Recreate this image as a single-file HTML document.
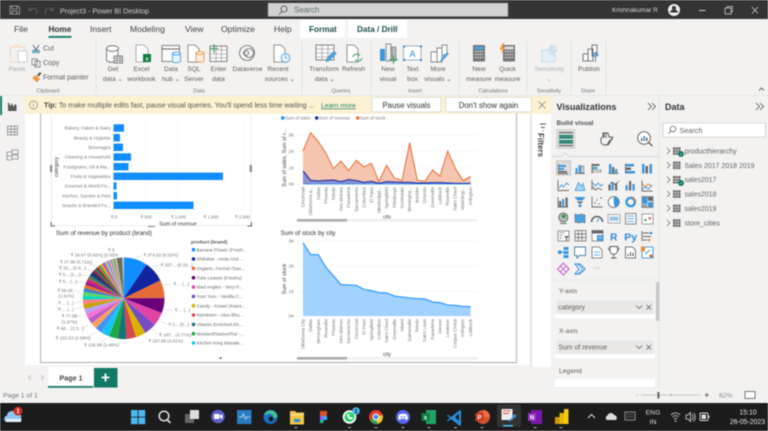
<!DOCTYPE html>
<html><head><meta charset="utf-8"><title>Project3 - Power BI Desktop</title>
<style>
html,body{margin:0;padding:0;width:768px;height:431px;overflow:hidden;background:#f3f2f1}
svg{display:block;filter:blur(.4px)}
text{font-family:"Liberation Sans",sans-serif;fill:#605e5c}
.tab{font-size:8.6px;fill:#444}
.rb{font-size:6.6px;fill:#605e5c;text-anchor:middle}
.gl{font-size:5.4px;fill:#777;text-anchor:middle}
.ax{font-size:4.4px;fill:#777}
.ti{font-size:6.2px;fill:#333}
.ct{font-size:4.6px;fill:#777;text-anchor:end}
.an{font-size:5.3px;fill:#444;text-anchor:middle}
.pl{font-size:13.5px;fill:#777}
.lg{font-size:4.7px;fill:#666}
.dt{font-size:7px;fill:#666}
.ol{fill:none;stroke:#666;stroke-width:.8}
.bl{fill:none;stroke:#3a96dd;stroke-width:.9}
.ic{fill:none;stroke:#666;stroke-width:.9}
.b{fill:#3a96dd}.g{fill:#666}
</style></head><body>
<svg width="768" height="431" viewBox="0 0 768 431" xmlns="http://www.w3.org/2000/svg">
<!-- base -->
<rect width="768" height="431" fill="#f3f2f1"/>
<rect width="768" height="19" fill="#343434"/>
<rect x="268" y="3" width="240" height="13.5" fill="#d2d2d2" stroke="#888" stroke-width=".5"/>
<circle cx="284" cy="9" r="3" fill="none" stroke="#444" stroke-width=".8"/><path d="M282 11.5l-3 3" stroke="#444" stroke-width=".8"/>
<text x="294" y="12.6" font-size="8" style="fill:#5f6f6c">Search</text>
<!-- titlebar -->
<path d="M10 6h8l1.5 1.5V14h-9.500z M12 6v3h5V6 M12 14v-3h5v3" fill="none" stroke="#aaa" stroke-width=".8"/>
<path d="M29 7v3.500h3.500M29 10.500c2-3 7-3 8 1 0 1-.5 2-1 2.500" fill="none" stroke="#666" stroke-width=".8"/>
<path d="M53 7v3.500h-3.500M53 10.500c-2-3-7-3-8 1 0 1 .5 2 1 2.500" fill="none" stroke="#666" stroke-width=".8"/>
<text x="60" y="13.300" font-size="7.100" style="fill:#d0d0d0">Project3 - Power BI Desktop</text>
<text x="612" y="12" font-size="6.400" style="fill:#d5d5d5">Krishnakumar R</text>
<circle cx="674" cy="10" r="6" fill="#eee"/><circle cx="674" cy="8" r="2" fill="#343434"/><path d="M670 12.500a4 3 0 0 1 8 0z" fill="#343434"/>
<path d="M699 10.500h6.500" stroke="#ccc"/><rect x="725" y="8" width="6" height="6" fill="none" stroke="#ccc" stroke-width=".8"/><path d="M727 8V6.500h5.500V12H731" fill="none" stroke="#ccc" stroke-width=".7"/>
<path d="M752 7l6 6.500M758 7l-6 6.500" stroke="#ccc" stroke-width=".8"/>
<!-- tabs -->
<rect x="300" y="20" width="45" height="18" fill="#fff"/><rect x="348" y="20" width="59" height="18" fill="#fff"/>
<text class="tab" x="14" y="32">File</text>
<text class="tab" x="48.500" y="32" style="font-weight:bold;fill:#333;font-size:8.200px">Home</text><rect x="48.500" y="36" width="23" height="1.800" fill="#117865"/>
<text class="tab" x="90" y="32">Insert</text>
<text class="tab" x="130" y="32">Modeling</text>
<text class="tab" x="185" y="32">View</text>
<text class="tab" x="221" y="32">Optimize</text>
<text class="tab" x="274" y="32">Help</text>
<text class="tab" x="309" y="32" style="fill:#1e4d4d;font-weight:bold;font-size:8.200px">Format</text>
<text class="tab" x="357" y="32" style="fill:#1e4d4d;font-weight:bold;font-size:8.200px">Data / Drill</text>
<!-- ribbon separators -->
<path d="M96 41v53M302 41v53M371 41v53M459 41v53M527 41v53M571 41v53M606 41v53" stroke="#dcdcdc" stroke-width=".7"/>
<path d="M0 95.500h768" stroke="#ddd" stroke-width=".6"/>
<!-- clipboard -->
<path d="M10.500 47h14v15h-14z" fill="none" stroke="#f2d5b8" stroke-width=".9"/><rect x="18" y="51" width="9" height="11" fill="#fff" stroke="#bbb" stroke-width=".7"/><rect x="14" y="45" width="6" height="3" fill="#f6e2ce"/>
<text class="rb" x="17" y="71" style="fill:#a8a8a8">Paste</text>
<path d="M33 45l3.500 5.500M39 45l-3.500 5.500" stroke="#557" stroke-width=".8"/><circle cx="34" cy="51.500" r="1.300" fill="none" stroke="#38a"/><circle cx="38" cy="51.500" r="1.300" fill="none" stroke="#38a"/>
<text x="43" y="50.500" font-size="7">Cut</text>
<path d="M32 59h5v6h-5zM35 61h5v6h-5z" fill="#f8f8f8" stroke="#666" stroke-width=".7"/>
<text x="43" y="65" font-size="7">Copy</text>
<path d="M32 78l4-3 4 4-3 3.500z" fill="#ee9a4c"/><path d="M37 75l3-3 1.500 1.500-3 3z" fill="#555"/>
<text x="43" y="79.500" font-size="7">Format painter</text>
<text class="gl" x="48" y="92.500">Clipboard</text>
<!-- data group -->
<path d="M106.500 49v11c0 3 11.500 3 11.500 0V49" fill="#fafafa" stroke="#666" stroke-width=".8"/><ellipse cx="112.500" cy="48.500" rx="6" ry="2.800" fill="#fafafa" stroke="#666" stroke-width=".8"/>
<rect x="114" y="56" width="8.500" height="7" fill="#eee" stroke="#555" stroke-width=".7"/><path d="M114 58.300h8.500M114 60.600h8.500M117 56v7M120 56v7" stroke="#555" stroke-width=".5"/>
<path d="M136 45h8l4 4v13h-12z" fill="#fff" stroke="#999" stroke-width=".8"/><rect x="143" y="54" width="8" height="8" fill="#107c41"/><text x="147" y="60.500" text-anchor="middle" font-size="5.500" style="fill:#fff;font-weight:bold">x</text>
<rect x="162" y="45.500" width="17.500" height="16" fill="#fafafa" stroke="#666" stroke-width=".8"/><path d="M162 49h17.500" stroke="#666"/><path d="M172.500 53.500v8c0 1.500 8 1.500 8 0v-8" fill="#e7f3fb" stroke="#3a96dd" stroke-width=".8"/><ellipse cx="176.500" cy="53.500" rx="4" ry="1.500" fill="#e7f3fb" stroke="#3a96dd" stroke-width=".8"/>
<path d="M188 45h7l4 4v13h-11z" fill="#fff" stroke="#777" stroke-width=".8"/><path d="M196 53v8c0 1.500 8 1.500 8 0v-8" fill="#fdf0e4" stroke="#e8893c" stroke-width=".8"/><ellipse cx="200" cy="53" rx="4" ry="1.500" fill="#fdf0e4" stroke="#e8893c" stroke-width=".8"/>
<rect x="210" y="46" width="17" height="15.500" fill="#fafafa" stroke="#666" stroke-width=".8"/><path d="M210 50h17M210 54h17M210 58h17M216 46v15.500M221.500 46v15.500" stroke="#888" stroke-width=".6"/><path d="M214 44v9M209.500 48.500h9" stroke="#3aa35b" stroke-width="1.100"/>
<circle cx="247" cy="53" r="7.500" fill="none" stroke="#666" stroke-width=".8"/><circle cx="249" cy="53" r="4.500" fill="none" stroke="#666" stroke-width=".8"/><circle cx="246" cy="53" r="2.500" fill="none" stroke="#666" stroke-width=".8"/>
<path d="M274 45h7l4 4v13h-11z" fill="#fff" stroke="#777" stroke-width=".8"/><circle cx="285.500" cy="58" r="4.300" fill="#eaf4fb" stroke="#3a96dd" stroke-width=".8"/><path d="M285.500 55.500V58h2" stroke="#3a96dd" fill="none" stroke-width=".7"/>
<text class="rb" x="113" y="71">Get</text><text class="rb" x="113" y="81">data ⌄</text>
<text class="rb" x="141.500" y="71">Excel</text><text class="rb" x="141.500" y="81">workbook</text>
<text class="rb" x="171" y="71">Data</text><text class="rb" x="171" y="81">hub ⌄</text>
<text class="rb" x="194" y="71">SQL</text><text class="rb" x="194" y="81">Server</text>
<text class="rb" x="218.500" y="71">Enter</text><text class="rb" x="218.500" y="81">data</text>
<text class="rb" x="247.500" y="71">Dataverse</text>
<text class="rb" x="278" y="71">Recent</text><text class="rb" x="280" y="81">sources ⌄</text>
<text class="gl" x="199" y="92.500">Data</text>
<!-- queries -->
<rect x="316" y="45" width="18" height="15" fill="#fafafa" stroke="#666" stroke-width=".8"/><path d="M316 49h18M316 53h18M316 57h18M322 45v15M328 45v15" stroke="#888" stroke-width=".6"/><path d="M326 62l1-4 7-7 2.500 2.500-7 7z" fill="#4aa3df" stroke="#2f7fb8" stroke-width=".4"/>
<path d="M347 45h7l4 4v13h-11z" fill="#fff" stroke="#777" stroke-width=".8"/><path d="M353 57a4 4 0 0 1 7-1.500M362 58a4 4 0 0 1-7 1.500" fill="none" stroke="#3aa35b" stroke-width="1"/>
<text class="rb" x="324" y="71">Transform</text><text class="rb" x="325" y="81">data ⌄</text><text class="rb" x="353.500" y="71">Refresh</text>
<text class="gl" x="341" y="92.500">Queries</text>
<!-- insert -->
<rect x="380" y="49" width="5" height="12" class="b"/><rect x="386" y="44" width="5" height="17" fill="#eee" stroke="#666" stroke-width=".7"/><rect x="392" y="47" width="4" height="14" fill="#bbb" stroke="#666" stroke-width=".6"/><path d="M393.500 55v9M389 59.500h9" stroke="#3aa35b" stroke-width="1"/>
<rect x="403.500" y="46" width="17.500" height="14" fill="#fff" stroke="#5a7f9a" stroke-width=".6"/><path d="M403 45.500h2v2h-2zM420 45.500h2v2h-2zM403 59h2v2h-2zM420 59h2v2h-2z" fill="#2b88d8"/><text x="412.500" y="57" text-anchor="middle" font-size="9" style="fill:#2b88d8">A</text>
<path d="M431 52h6v10h-6zM437 48h5v14h-5zM442 45h5v10h-5z" fill="#fafafa" stroke="#666" stroke-width=".7"/><path d="M440 62l1-3 6-7 2 1.800-6.500 7z" fill="#4aa3df"/>
<text class="rb" x="388" y="71">New</text><text class="rb" x="388" y="81">visual</text><text class="rb" x="412.500" y="71">Text</text><text class="rb" x="412.500" y="81">box</text><text class="rb" x="438" y="71">More</text><text class="rb" x="438" y="81">visuals ⌄</text>
<text class="gl" x="415" y="92.500">Insert</text>
<!-- calc -->
<rect x="473" y="45" width="12" height="16.500" fill="#777" rx=".6"/><rect x="474.500" y="46.500" width="9" height="3" fill="#4aa3df"/><path d="M475 51.500h8M475 54.500h8M475 57.500h8" stroke="#fff" stroke-dasharray="1.200 1.200" stroke-width="1.200"/>
<rect x="503" y="45" width="12" height="16.500" fill="#777" rx=".6"/><rect x="504.500" y="46.500" width="9" height="3" fill="#ddd"/><path d="M505 51.500h8M505 54.500h8M505 57.500h8" stroke="#fff" stroke-dasharray="1.200 1.200" stroke-width="1.200"/><path d="M503 43l-3.500 6.500h3l-2 5 5-7h-3l2-4.500z" fill="#f0932b"/>
<text class="rb" x="479" y="71">New</text><text class="rb" x="479" y="81">measure</text><text class="rb" x="507.500" y="71">Quick</text><text class="rb" x="507.500" y="81">measure</text>
<text class="gl" x="493" y="92.500">Calculations</text>
<!-- sensitivity/publish -->
<path d="M542 50h13v12h-13z" fill="#e4eef6" stroke="#c5d9e8" stroke-width=".8"/><path d="M551 44l7 6-5 6-6-5z" fill="#cfe1ef"/><circle cx="555" cy="47" r="2" fill="#dde9f2"/>
<text class="rb" x="549.500" y="71" style="fill:#b0b0b0">Sensitivity</text><text class="rb" x="549" y="81" style="fill:#b0b0b0">⌄</text><text class="gl" x="549" y="92.500">Sensitivity</text>
<path d="M583 54h5v7h-5zM588 49h5v12h-5zM592 45h5v11h-5z" fill="#fafafa" stroke="#555" stroke-width=".8"/><path d="M595.500 62v-9M592.500 55.500l3-3 3 3" fill="none" stroke="#2b88d8" stroke-width=".9"/>
<text class="rb" x="589" y="71">Publish</text><text class="gl" x="588" y="92.500">Share</text>
<path d="M759 90.500l2.500-2.500 2.500 2.500" fill="none" stroke="#444" stroke-width=".8"/>

<!-- canvas -->
<rect x="25" y="96" width="506" height="269" fill="#fff"/>
<rect x="530" y="96" width="2" height="271" fill="#e6e6e6"/>
<rect x="532" y="114" width="19" height="253" fill="#fff"/>
<!-- left rail -->
<rect x="0" y="96" width="2" height="19" fill="#117865"/>
<path d="M8 102v9h8.500v-6l-1.500-1-1.500 3-1.500-4-1.500 3-1.500-3z" fill="#5a5a5a"/>
<g fill="none" stroke="#8a8a8a" stroke-width=".8"><rect x="7.500" y="126" width="10" height="9"/><path d="M7.500 129h10M7.500 132h10M11 126v9M14.500 126v9"/>
<path d="M12 150h6v4h-6zM12 155h6v4h-6zM12 160h-5v-8h5M7 156h5"/></g>

<!-- tip bar -->
<rect x="25" y="96" width="526" height="18" fill="#fcf2d2"/>
<circle cx="33.500" cy="105" r="4" fill="none" stroke="#888" stroke-width=".7"/><path d="M33.500 104v3M33.500 102.500v.8" stroke="#888" stroke-width=".7"/>
<text x="44" y="107.500" font-size="7.100" style="fill:#555"><tspan style="font-weight:bold;fill:#444">Tip:</tspan> To make multiple edits fast, pause visual queries. You'll spend less time waiting ...</text>
<text x="321" y="107.500" font-size="6.800" style="fill:#1d7c6b;text-decoration:underline">Learn more</text>
<rect x="372" y="97.300" width="69" height="14.500" fill="#fff" stroke="#ccc" stroke-width=".6"/><text x="406.500" y="107.800" text-anchor="middle" font-size="7.800" style="fill:#333">Pause visuals</text>
<rect x="446" y="97.300" width="85.500" height="14.500" fill="#fff" stroke="#ccc" stroke-width=".6"/><text x="488.500" y="107.800" text-anchor="middle" font-size="7.800" style="fill:#333">Don't show again</text>
<path d="M538.500 101.500l7 7M545.500 101.500l-7 7" stroke="#777" stroke-width=".7"/>

<!-- dotted page border -->
<path d="M40.500 114V362.500H516.500V114" fill="none" stroke="#555" stroke-width=".9" stroke-dasharray="1 1"/>

<!-- bar chart frame -->
<path d="M51.500 114V225.500H251V114" fill="none" stroke="#ddd" stroke-width=".6"/>
<path d="M51 222v4h4M247.500 226h4v-4" fill="none" stroke="#666" stroke-width="1"/><path d="M148 226.500h7" stroke="#888" stroke-width="1"/>
<rect x="50" y="165" width="2.200" height="7" fill="#888"/><rect x="249.700" y="165" width="2.200" height="7" fill="#888"/>
<path d="M146 121v90M178 121v90M210.500 121v90M243 121v90" stroke="#eee" stroke-width=".5" stroke-dasharray="1 1"/>
<g fill="#118dff">
<rect x="113.500" y="124.300" width="10.500" height="7.400"/><rect x="113.500" y="134" width="6.500" height="7.400"/><rect x="113.500" y="143.600" width="9.500" height="7.400"/><rect x="113.500" y="153.300" width="17.500" height="7.400"/><rect x="113.500" y="163" width="15" height="7.400"/><rect x="113.500" y="172.600" width="109.500" height="7.400"/><rect x="113.500" y="182.300" width="3" height="7.400"/><rect x="113.500" y="192" width="3.500" height="7.400"/><rect x="113.500" y="201.600" width="80" height="7.400"/>
</g>
<g class="ct" text-anchor="end" font-size="4.600">
<text class="ct" x="110.500" y="129.600">Bakery, Cakes &amp; Dairy</text><text class="ct" x="110.500" y="139.300">Beauty &amp; Hygiene</text><text class="ct" x="110.500" y="149">Beverages</text><text class="ct" x="110.500" y="158.600">Cleaning &amp; Household</text><text class="ct" x="110.500" y="168.300">Foodgrains, Oil &amp; Ma...</text><text class="ct" x="110.500" y="178">Fruits &amp; Vegetables</text><text class="ct" x="110.500" y="187.600">Gourmet &amp; World Fo...</text><text class="ct" x="110.500" y="197.300">Kitchen, Garden &amp; Pets</text><text class="ct" x="110.500" y="207">Snacks &amp; Branded Fo...</text>
</g>
<text class="an" transform="translate(58 167) rotate(-90)">category</text>
<g><text class="ax" x="114" y="218.500" text-anchor="middle">₹ 0</text><text class="ax" x="146" y="218.500" text-anchor="middle">₹ 500</text><text class="ax" x="178.500" y="218.500" text-anchor="middle">₹ 1,000</text><text class="ax" x="211" y="218.500" text-anchor="middle">₹ 1,500</text><text class="ax" x="242.500" y="218.500" text-anchor="middle">₹ 2,000</text></g>
<text class="an" x="178" y="225.500">Sum of revenue</text>

<!-- pie -->
<text class="ti" x="56" y="235">Sum of revenue by product (brand)</text>
<g fill="none" stroke-width="40.800" transform="rotate(-90 123.700 298.300)">
<circle cx="123.700" cy="298.300" r="20.400" pathLength="100" stroke="#118dff" stroke-dasharray="9.52 100" stroke-dashoffset="0"/>
<circle cx="123.700" cy="298.300" r="20.400" pathLength="100" stroke="#12239e" stroke-dasharray="8.33 100" stroke-dashoffset="-9.52"/>
<circle cx="123.700" cy="298.300" r="20.400" pathLength="100" stroke="#e66c37" stroke-dasharray="7.15 100" stroke-dashoffset="-17.85"/>
<circle cx="123.700" cy="298.300" r="20.400" pathLength="100" stroke="#6b007b" stroke-dasharray="6 100" stroke-dashoffset="-25"/>
<circle cx="123.700" cy="298.300" r="20.400" pathLength="100" stroke="#e044a7" stroke-dasharray="5.5 100" stroke-dashoffset="-31"/>
<circle cx="123.700" cy="298.300" r="20.400" pathLength="100" stroke="#744ec2" stroke-dasharray="4.8 100" stroke-dashoffset="-36.5"/>
<circle cx="123.700" cy="298.300" r="20.400" pathLength="100" stroke="#d9b300" stroke-dasharray="4 100" stroke-dashoffset="-41.3"/>
<circle cx="123.700" cy="298.300" r="20.400" pathLength="100" stroke="#d64550" stroke-dasharray="3.8 100" stroke-dashoffset="-45.3"/>
<circle cx="123.700" cy="298.300" r="20.400" pathLength="100" stroke="#197278" stroke-dasharray="3.5 100" stroke-dashoffset="-49.1"/>
<circle cx="123.700" cy="298.300" r="20.400" pathLength="100" stroke="#1aab40" stroke-dasharray="3.5 100" stroke-dashoffset="-52.6"/>
<circle cx="123.700" cy="298.300" r="20.400" pathLength="100" stroke="#15c6f4" stroke-dasharray="3.4 100" stroke-dashoffset="-56.1"/>
<circle cx="123.700" cy="298.300" r="20.400" pathLength="100" stroke="#4092ff" stroke-dasharray="2.7 100" stroke-dashoffset="-59.5"/>
<circle cx="123.700" cy="298.300" r="20.400" pathLength="100" stroke="#ffa058" stroke-dasharray="2.5 100" stroke-dashoffset="-62.2"/>
<circle cx="123.700" cy="298.300" r="20.400" pathLength="100" stroke="#be5dc9" stroke-dasharray="2.3 100" stroke-dashoffset="-64.7"/>
<circle cx="123.700" cy="298.300" r="20.400" pathLength="100" stroke="#f472d0" stroke-dasharray="2.1 100" stroke-dashoffset="-67"/>
<circle cx="123.700" cy="298.300" r="20.400" pathLength="100" stroke="#b5a1ff" stroke-dasharray="2 100" stroke-dashoffset="-69.1"/>
<circle cx="123.700" cy="298.300" r="20.400" pathLength="100" stroke="#c4a200" stroke-dasharray="1.9 100" stroke-dashoffset="-71.1"/>
<circle cx="123.700" cy="298.300" r="20.400" pathLength="100" stroke="#ff8080" stroke-dasharray="1.8 100" stroke-dashoffset="-73"/>
<circle cx="123.700" cy="298.300" r="20.400" pathLength="100" stroke="#00dbbc" stroke-dasharray="1.7 100" stroke-dashoffset="-74.8"/>
<circle cx="123.700" cy="298.300" r="20.400" pathLength="100" stroke="#5bd667" stroke-dasharray="1.5 100" stroke-dashoffset="-76.5"/>
<circle cx="123.700" cy="298.300" r="20.400" pathLength="100" stroke="#3a7fd5" stroke-dasharray="1.5 100" stroke-dashoffset="-78"/>
<circle cx="123.700" cy="298.300" r="20.400" pathLength="100" stroke="#f06a1d" stroke-dasharray="1.4 100" stroke-dashoffset="-79.5"/>
<circle cx="123.700" cy="298.300" r="20.400" pathLength="100" stroke="#8a1f8f" stroke-dasharray="1.2 100" stroke-dashoffset="-80.9"/>
<circle cx="123.700" cy="298.300" r="20.400" pathLength="100" stroke="#e0148a" stroke-dasharray="1.1 100" stroke-dashoffset="-82.1"/>
<circle cx="123.700" cy="298.300" r="20.400" pathLength="100" stroke="#8b6b3d" stroke-dasharray="1 100" stroke-dashoffset="-83.2"/>
<circle cx="123.700" cy="298.300" r="20.400" pathLength="100" stroke="#1f7a6d" stroke-dasharray="1 100" stroke-dashoffset="-84.2"/>
<circle cx="123.700" cy="298.300" r="20.400" pathLength="100" stroke="#1c2b8f" stroke-dasharray=".9 100" stroke-dashoffset="-85.2"/>
<circle cx="123.700" cy="298.300" r="20.400" pathLength="100" stroke="#23303a" stroke-dasharray=".9 100" stroke-dashoffset="-86.1"/>
<circle cx="123.700" cy="298.300" r="20.400" pathLength="100" stroke="#b31e5e" stroke-dasharray=".8 100" stroke-dashoffset="-87"/>
<circle cx="123.700" cy="298.300" r="20.400" pathLength="100" stroke="#0f8a4f" stroke-dasharray=".8 100" stroke-dashoffset="-87.8"/>
<circle cx="123.700" cy="298.300" r="20.400" pathLength="100" stroke="#7a1f2b" stroke-dasharray=".7 100" stroke-dashoffset="-88.6"/>
<circle cx="123.700" cy="298.300" r="20.400" pathLength="100" stroke="#e4572e" stroke-dasharray=".7 100" stroke-dashoffset="-89.3"/>
<circle cx="123.700" cy="298.300" r="20.400" pathLength="100" stroke="#26a96c" stroke-dasharray=".7 100" stroke-dashoffset="-90"/>
<circle cx="123.700" cy="298.300" r="20.400" pathLength="100" stroke="#f4b400" stroke-dasharray=".7 100" stroke-dashoffset="-90.7"/>
<circle cx="123.700" cy="298.300" r="20.400" pathLength="100" stroke="#d94fa3" stroke-dasharray=".7 100" stroke-dashoffset="-91.4"/>
<circle cx="123.700" cy="298.300" r="20.400" pathLength="100" stroke="#7f6fd6" stroke-dasharray=".7 100" stroke-dashoffset="-92.1"/>
<circle cx="123.700" cy="298.300" r="20.400" pathLength="100" stroke="#e9c46a" stroke-dasharray=".7 100" stroke-dashoffset="-92.8"/>
<circle cx="123.700" cy="298.300" r="20.400" pathLength="100" stroke="#4e9fd8" stroke-dasharray=".7 100" stroke-dashoffset="-93.5"/>
<circle cx="123.700" cy="298.300" r="20.400" pathLength="100" stroke="#f09b9b" stroke-dasharray=".7 100" stroke-dashoffset="-94.2"/>
<circle cx="123.700" cy="298.300" r="20.400" pathLength="100" stroke="#9b8fd0" stroke-dasharray=".7 100" stroke-dashoffset="-94.9"/>
<circle cx="123.700" cy="298.300" r="20.400" pathLength="100" stroke="#aac95c" stroke-dasharray=".7 100" stroke-dashoffset="-95.6"/>
<circle cx="123.700" cy="298.300" r="20.400" pathLength="100" stroke="#8d8d8d" stroke-dasharray=".7 100" stroke-dashoffset="-96.3"/>
<circle cx="123.700" cy="298.300" r="20.400" pathLength="100" stroke="#c9c2a8" stroke-dasharray=".7 100" stroke-dashoffset="-97"/>
<circle cx="123.700" cy="298.300" r="20.400" pathLength="100" stroke="#6d6d5e" stroke-dasharray="2.300 100" stroke-dashoffset="-97.7"/>
</g>
<g transform="translate(40 225) scale(.33333)">
<g fill="none" stroke="#ccc" stroke-width="1.500"><path d="M285 101l20-10M342 125l17-5M368 179l27-2M373 254l27 1M362 288l20 10M338 312l15 17M313 333l10 14M240 346v14M200 338l-20 18M168 322l-25 14M145 300l-20 10M132 270l-25 5M130 245l-25 8M130 230l-25 4M128 205l-22-8M135 172l-30-2M145 152l-30-3M160 137l-30-7M175 125l-40-12M205 105l-20-12M225 100l-10-15"/></g>
<text class="pl" x="310" y="94">₹ 374.62 (9.52%)</text><text class="pl" x="362" y="124">₹ 327... (8.33...)</text><text class="pl" x="400" y="181">₹ ... (...)</text><text class="pl" x="404" y="259">₹ ... (...)</text><text class="pl" x="385" y="303">₹ 2... (5...)</text><text class="pl" x="357" y="334">₹ 187... (4.77%)</text><text class="pl" x="325" y="352">₹ 157.88 (4.01%)</text><text class="pl" x="132" y="365">₹ 136.98 (3.48%)</text><text class="pl" x="47" y="344">₹ 101.53 (2.58%)</text><text class="pl" x="50" y="315">₹ 90... (2.3...)</text><text class="pl" x="65" y="277">₹ 77.68</text><text class="pl" x="65" y="295">(1.97%)</text><text class="pl" x="54" y="258">₹ ... (...)</text><text class="pl" x="54" y="239">₹ ... (...)</text><text class="pl" x="52" y="201">₹ 59.28</text><text class="pl" x="55" y="217">(1.51%)</text><text class="pl" x="56" y="174">₹ 5... (...)</text><text class="pl" x="56" y="153">₹ 5... (1....)</text><text class="pl" x="57" y="133">₹ 32... (0.8...)</text><text class="pl" x="60" y="115">₹ 27.98 (0.71%)</text><text class="pl" x="92" y="95">₹ 16.67 (0.42%) (0.62%</text><text class="pl" x="204" y="79">₹ 6</text>
</g>
<text x="191" y="243.500" font-size="4.900" style="font-weight:bold;fill:#555">product (brand)</text>
<g><circle cx="193.500" cy="249.700" r="1.800" fill="#118dff"/><circle cx="193.500" cy="259" r="1.800" fill="#12239e"/><circle cx="193.500" cy="268.400" r="1.800" fill="#e66c37"/><circle cx="193.500" cy="277.700" r="1.800" fill="#6b007b"/><circle cx="193.500" cy="287" r="1.800" fill="#e044a7"/><circle cx="193.500" cy="296.400" r="1.800" fill="#744ec2"/><circle cx="193.500" cy="305.700" r="1.800" fill="#d9b300"/><circle cx="193.500" cy="315" r="1.800" fill="#d64550"/><circle cx="193.500" cy="324.400" r="1.800" fill="#197278"/><circle cx="193.500" cy="333.700" r="1.800" fill="#1aab40"/><circle cx="193.500" cy="343" r="1.800" fill="#15c6f4"/></g>
<text class="lg" x="196.500" y="251.300">Banana Flower (Fresh...</text><text class="lg" x="196.500" y="260.600">Shikakai - Amla And ...</text><text class="lg" x="196.500" y="270">Organic, Fennel /Sau...</text><text class="lg" x="196.500" y="279.300">Tulsi Leaves (Fresho)</text><text class="lg" x="196.500" y="288.600">Mad Angles - Very P...</text><text class="lg" x="196.500" y="298">Yum Yum - Vanilla C...</text><text class="lg" x="196.500" y="307.300">Candy - Kusari (Kiara...</text><text class="lg" x="196.500" y="316.600">Namkeen - Aloo Bhu...</text><text class="lg" x="196.500" y="326">Vitamin Enriched Kh...</text><text class="lg" x="196.500" y="335.300">Mustard/Sasive/Rai -...</text><text class="lg" x="196.500" y="344.600">Kitchen King Masala ...</text>
<path d="M219 357.500l1.500 1.800 1.500-1.800z" fill="#333"/>

<!-- chart 1 -->
<circle cx="282.700" cy="118" r="1.700" fill="#118dff"/><text class="ax" x="285" y="119.700">Sum of sales</text>
<circle cx="316.700" cy="118" r="1.700" fill="#12239e"/><text class="ax" x="319" y="119.700">Sum of revenue</text>
<circle cx="357.700" cy="118" r="1.700" fill="#e66c37"/><text class="ax" x="360" y="119.700">Sum of stock</text>
<path d="M297 135h181M297 151.300h181M297 168h181M297 184h181" stroke="#e4e4e4" stroke-width=".5" stroke-dasharray="1 1"/>
<g transform="translate(270 110) scale(.33333)">
<polygon points="99,123 122,68 145,95 168,130 190,176 213,153 236,182 259,151 282,171 304,160 327,215 350,166 373,204 396,212 419,98 442,211 465,214 488,180 510,199 533,123 556,175 579,212 602,199 602,222 99,222" fill="#f6c5b0"/>
<polyline points="99,123 122,68 145,95 168,130 190,176 213,153 236,182 259,151 282,171 304,160 327,215 350,166 373,204 396,212 419,98 442,211 465,214 488,180 510,199 533,123 556,175 579,212 602,199" fill="none" stroke="#e66c37" stroke-width="3"/>
<polygon points="99,183 122,211 145,213 168,211 190,210 213,215 236,209 259,212 282,217 304,214 327,220 350,215 373,216 396,217 419,217 442,219 465,219 488,218 510,218 533,219 556,220 579,220 602,220 602,222 99,222" fill="#8f90cf"/>
<polyline points="99,183 122,211 145,213 168,211 190,210 213,215 236,209 259,212 282,217 304,214 327,220 350,215 373,216 396,217 419,217 442,219 465,219 488,218 510,218 533,219 556,220 579,220 602,220" fill="none" stroke="#12239e" stroke-width="3"/>
<path d="M99 222H602" stroke="#118dff" stroke-width="2.500"/>
</g>
<text class="ax" x="294" y="136.500" text-anchor="end">3K</text><text class="ax" x="294" y="153" text-anchor="end">2K</text><text class="ax" x="294" y="169.500" text-anchor="end">1K</text><text class="ax" x="294" y="185.500" text-anchor="end">0K</text>
<text class="an" transform="translate(286 158) rotate(-90)">Sum of sales, Sum of r...</text>
<g>
<text class="ct" transform="translate(304.600 187) rotate(-90)">Cincinnati</text><text class="ct" transform="translate(312.200 187) rotate(-90)">Oklahoma a...</text><text class="ct" transform="translate(319.800 187) rotate(-90)">Dallas</text><text class="ct" transform="translate(327.400 187) rotate(-90)">Phoenix</text><text class="ct" transform="translate(335 187) rotate(-90)">Toledo</text><text class="ct" transform="translate(342.600 187) rotate(-90)">Des Moines</text><text class="ct" transform="translate(350.200 187) rotate(-90)">Pasadena</text><text class="ct" transform="translate(357.800 187) rotate(-90)">Sacramento</text><text class="ct" transform="translate(365.400 187) rotate(-90)">Columbus</text><text class="ct" transform="translate(373 187) rotate(-90)">El Paso</text><text class="ct" transform="translate(380.600 187) rotate(-90)">Mississippi...</text><text class="ct" transform="translate(388.200 187) rotate(-90)">Springfield</text><text class="ct" transform="translate(395.800 187) rotate(-90)">Pittsburgh</text><text class="ct" transform="translate(403.400 187) rotate(-90)">Scottsdale</text><text class="ct" transform="translate(411 187) rotate(-90)">Birmingha...</text><text class="ct" transform="translate(418.600 187) rotate(-90)">Boulder</text><text class="ct" transform="translate(426.200 187) rotate(-90)">Orlando</text><text class="ct" transform="translate(433.800 187) rotate(-90)">Greenville</text><text class="ct" transform="translate(441.400 187) rotate(-90)">Lubbock</text><text class="ct" transform="translate(449 187) rotate(-90)">Roseville</text><text class="ct" transform="translate(456.600 187) rotate(-90)">Saint Cloud</text><text class="ct" transform="translate(464.200 187) rotate(-90)">Washingt...</text><text class="ct" transform="translate(471.800 187) rotate(-90)">Arlington</text>
</g>
<text class="an" x="387" y="218.500">city</text>
<rect x="297" y="219" width="180" height="2.600" fill="#efefef"/><rect x="297" y="219" width="50" height="2.600" fill="#ababab"/>

<!-- chart 2 -->
<text class="ti" x="280.500" y="235">Sum of stock by city</text>
<path d="M297 241h181M297 266h181M297 291.300h181M297 316h181" stroke="#e4e4e4" stroke-width=".5" stroke-dasharray="1 1"/>
<g transform="translate(270 225) scale(.33333)">
<polygon points="99,53 122,89 145,89 168,127 190,152 213,179 236,180 259,181 282,193 304,197 327,203 350,204 373,213 396,216 419,219 442,221 465,222 488,231 510,233 533,240 556,241 579,244 602,245 602,273 99,273" fill="#a0d1ff"/>
<polyline points="99,53 122,89 145,89 168,127 190,152 213,179 236,180 259,181 282,193 304,197 327,203 350,204 373,213 396,216 419,219 442,221 465,222 488,231 510,233 533,240 556,241 579,244 602,245" fill="none" stroke="#118dff" stroke-width="3"/>
</g>
<text class="ax" x="294" y="242.500" text-anchor="end">3K</text><text class="ax" x="294" y="267.500" text-anchor="end">2K</text><text class="ax" x="294" y="292.800" text-anchor="end">1K</text><text class="ax" x="294" y="317.500" text-anchor="end">0K</text>
<text class="an" transform="translate(286 279) rotate(-90)">Sum of stock</text>
<g>
<text class="ct" transform="translate(304.600 319) rotate(-90)">Oklahoma City</text><text class="ct" transform="translate(312.200 319) rotate(-90)">Dallas</text><text class="ct" transform="translate(319.800 319) rotate(-90)">Birmingham</text><text class="ct" transform="translate(327.400 319) rotate(-90)">Roseville</text><text class="ct" transform="translate(335 319) rotate(-90)">Phoenix</text><text class="ct" transform="translate(342.600 319) rotate(-90)">Des Moines</text><text class="ct" transform="translate(350.200 319) rotate(-90)">Sacramento</text><text class="ct" transform="translate(357.800 319) rotate(-90)">Cincinnati</text><text class="ct" transform="translate(365.400 319) rotate(-90)">El Paso</text><text class="ct" transform="translate(373 319) rotate(-90)">Springfield</text><text class="ct" transform="translate(380.600 319) rotate(-90)">Columbus</text><text class="ct" transform="translate(388.200 319) rotate(-90)">Saint Cloud</text><text class="ct" transform="translate(395.800 319) rotate(-90)">Greenville</text><text class="ct" transform="translate(403.400 319) rotate(-90)">Miami</text><text class="ct" transform="translate(411 319) rotate(-90)">Gainesville</text><text class="ct" transform="translate(418.600 319) rotate(-90)">Toledo</text><text class="ct" transform="translate(426.200 319) rotate(-90)">Saint Louis</text><text class="ct" transform="translate(433.800 319) rotate(-90)">Pasadena</text><text class="ct" transform="translate(441.400 319) rotate(-90)">Denver</text><text class="ct" transform="translate(449 319) rotate(-90)">Lewiston</text><text class="ct" transform="translate(456.600 319) rotate(-90)">Corpus Christi</text><text class="ct" transform="translate(464.200 319) rotate(-90)">Arlington</text><text class="ct" transform="translate(471.800 319) rotate(-90)">Lubbock</text>
</g>
<text class="an" x="387" y="356">city</text>
<rect x="297" y="357" width="180" height="2.600" fill="#efefef"/><rect x="297" y="357" width="50" height="2.600" fill="#ababab"/>

<!-- filters -->
<path d="M540 124h6M541 127.500h4M542.500 131h1" stroke="#555" stroke-width=".9"/>
<text transform="translate(538 133) rotate(90)" font-size="8" style="font-weight:bold;fill:#444">Filters</text>

<!-- viz panel -->
<rect x="551" y="96" width="108" height="291" fill="#f3f2f1"/>
<path d="M659 96v291" stroke="#e0e0e0" stroke-width=".8"/>
<text x="556.500" y="110" font-size="9" style="font-weight:bold;fill:#333">Visualizations</text>
<path d="M648 103l3.500 3.500-3.500 3.500M652 103l3.500 3.500-3.500 3.500" fill="none" stroke="#555" stroke-width=".8"/>
<text x="556.500" y="125" font-size="6.600" style="font-weight:bold;fill:#555">Build visual</text>
<rect x="556" y="129" width="19.500" height="20" fill="#d9d9d9"/>
<rect x="559" y="132" width="14" height="1.200" fill="#666"/><rect x="559" y="135" width="14" height="3.500" fill="#117865"/><rect x="559" y="140" width="14" height="3.500" fill="#117865"/><rect x="559" y="145" width="14" height="1.200" fill="#666"/><path d="M559 136.500h14M559 141.500h14" stroke="#fff" stroke-width=".5" stroke-dasharray="1.500 1"/>
<path d="M601 143v-5l2-1v-4h5l1 4h3M604 133v5M606 133v5M601 143l3 2h3l3-5" fill="none" stroke="#555" stroke-width=".9"/><path d="M608 145l5-8" stroke="#555" stroke-width="1.300"/>
<circle cx="644" cy="138" r="6.300" fill="#fff" stroke="#555" stroke-width=".9"/><rect x="641" y="138" width="1.500" height="3" fill="#666"/><rect x="643.500" y="136" width="1.500" height="5" fill="#3a96dd"/><rect x="646" y="137.500" width="1.500" height="3.500" fill="#666"/><path d="M648.500 142.500l4 3.500" stroke="#333" stroke-width="1.100"/>
<path d="M552 156.500h9l4-3.500 4 3.500h90" fill="none" stroke="#ccc" stroke-width=".7"/>
<rect x="556.500" y="161" width="14" height="14" fill="#dedede" stroke="#aaa" stroke-width=".6"/>
<!-- row 1 -->
<g>
<path d="M558.500 164v9.500h9.500" class="ic"/><rect x="559" y="165" width="7" height="2" class="b"/><rect x="559" y="168" width="5" height="2" class="b"/><rect x="559" y="171" width="8" height="1.500" class="g"/>
<path d="M575 173.500h10" class="ic"/><rect x="575.500" y="168" width="2" height="5" class="b"/><rect x="578.500" y="165" width="2.200" height="8" class="b"/><rect x="581.500" y="166" width="2.200" height="7" fill="none" stroke="#666" stroke-width=".7"/>
<path d="M592 163.500v10" class="ic"/><rect x="592.500" y="164" width="7" height="2" class="g"/><rect x="592.500" y="167" width="5" height="2" class="b"/><rect x="592.500" y="170" width="8.500" height="2" fill="none" stroke="#666" stroke-width=".6"/>
<path d="M608.500 173.500h10" class="ic"/><rect x="609" y="164" width="2.300" height="9.500" class="b"/><rect x="612" y="167" width="2.300" height="6.500" class="g"/><rect x="615" y="169" width="2.300" height="4.500" class="b"/>
<path d="M625.500 163.500v10" class="ic"/><rect x="626" y="164" width="8" height="2.500" class="b"/><rect x="626" y="167.500" width="5" height="2.500" class="g"/><rect x="626" y="171" width="9" height="2.500" class="b"/>
<rect x="642" y="164" width="2.500" height="9.500" class="b"/><rect x="645.500" y="166" width="2.500" height="7.500" class="g"/><rect x="649.500" y="164" width="2.500" height="9.500" class="b"/>
</g>
<!-- row 2 -->
<g>
<path d="M558 180v10.500h11" class="ic"/><path d="M559 188l2.500-3 2 2 3-4 2.500 2" class="bl"/>
<path d="M575 190.500l3.500-8 3 4 1.500-3 2 7z" fill="#a9d3f0" stroke="#3a96dd" stroke-width=".7"/>
<path d="M592 180v10" class="ic"/><path d="M592.500 183l3 3 2.500-3 3 3 2-2" class="bl"/><path d="M592.500 187l3 3 2.500-2 4 2" class="ic"/>
<rect x="608.500" y="185" width="2.200" height="5.500" class="g"/><rect x="611.500" y="182" width="2.200" height="8.500" class="b"/><rect x="615" y="183" width="2.200" height="7.500" class="g"/><path d="M608 186l4-4 3 3 4-4" fill="none" stroke="#666" stroke-width=".7"/>
<rect x="625.500" y="185" width="2.200" height="5.500" class="b"/><rect x="629" y="181" width="2.200" height="9.500" class="g"/><rect x="632.500" y="184" width="2.200" height="6.500" class="b"/>
<path d="M642 180.500v10.500h10.500" class="ic"/><path d="M642.500 184l3 3 2.500-3 4 2" fill="none" stroke="#e8893c" stroke-width="1"/><path d="M642.500 189l3-2 3 2 3.500-4" class="bl"/>
</g>
<!-- row 3 -->
<g>
<path d="M558 197v10h10" class="ic"/><rect x="559" y="201" width="2.200" height="6" class="g"/><rect x="562" y="199" width="2.200" height="8" class="b"/><rect x="565.500" y="197.500" width="2.200" height="9.500" class="g"/>
<path d="M574.500 197h11l-3 3.500h-5z" class="b"/><path d="M577 201.500h6l-1.500 2h-3z" class="g"/><path d="M578.500 204.500h3v2.500h-3z" class="b"/>
<path d="M592 196.500v10.500h10.500" class="ic"/><circle cx="595" cy="203" r=".8" class="g"/><circle cx="597" cy="200" r=".8" class="b"/><circle cx="599" cy="204" r=".8" class="b"/><circle cx="601" cy="198" r=".8" class="g"/>
<circle cx="613.700" cy="202" r="5.500" fill="#fff" stroke="#666" stroke-width=".8"/><path d="M613.700 202v-5.500a5.500 5.500 0 0 1 1 10.900z" class="b"/>
<circle cx="630.700" cy="202" r="4.200" fill="none" stroke="#3a96dd" stroke-width="2.400"/><path d="M630.700 197.800a4.200 4.200 0 0 1 4.200 4.200" fill="none" stroke="#888" stroke-width="2.400"/>
<rect x="642" y="196.500" width="11" height="11" fill="#fff" stroke="#666" stroke-width=".7"/><rect x="642.500" y="197" width="5" height="7" class="b"/><rect x="648" y="197" width="4.500" height="4" class="g"/><rect x="648" y="202" width="4.500" height="5" class="b"/><rect x="642.500" y="204.500" width="5" height="2.500" fill="#999"/>
</g>
<!-- row 4 -->
<g>
<circle cx="563.300" cy="217.500" r="4.500" fill="#bbb" stroke="#555" stroke-width=".8"/><path d="M561 216l3-2 2 2-2 3z" fill="#2e9d4e"/><path d="M560 223.500h6.500" stroke="#666"/>
<path d="M575 214l3 1 3-1 4 1v8l-3-1-3 1-3-1-1 .500z" fill="#4aa3df" stroke="#666" stroke-width=".6"/>
<path d="M591.500 222a5.500 5.500 0 0 1 11 0" fill="none" stroke="#666" stroke-width="1.600"/><path d="M597 222l2-3.500" stroke="#3a96dd"/>
<rect x="608" y="214.500" width="12" height="8.500" fill="#fff" stroke="#888" stroke-width=".7"/><rect x="609.500" y="216.500" width="9" height="4.500" fill="#9cc8e8"/>
<rect x="625.500" y="213.500" width="10.500" height="10.500" fill="#fff" stroke="#666" stroke-width=".8"/><path d="M627 216h7M627 218.700h7M627 221.500h7" stroke="#3a96dd" stroke-width=".8"/>
<rect x="642" y="214" width="11" height="10" fill="#fff" stroke="#777" stroke-width=".7"/><path d="M644 221l1.500-3 1.500 3z" fill="#3aa35b"/><path d="M648 217.500h3.500l-1.700 2.500z" fill="#d13438"/>
</g>
<!-- row 5 -->
<g>
<rect x="558" y="231" width="11" height="10" fill="#fff" stroke="#666" stroke-width=".7"/><path d="M564 236h5l-2 2.500v3l-1-.7v-2.300z" class="g"/><path d="M559.500 233h5M559.500 235.500h3M559.500 238h3" stroke="#777" stroke-width=".7"/>
<g fill="none" stroke="#666" stroke-width=".7"><rect x="575" y="230.500" width="11" height="10.500"/><path d="M575 234h11M575 237.500h11M578.500 230.500v10.500M582 230.500v10.500"/></g>
<rect x="592" y="230.500" width="11" height="10.500" fill="#fff" stroke="#666" stroke-width=".7"/><rect x="592" y="230.500" width="11" height="3" fill="#666"/><path d="M597 235h6v6h-6z" class="b"/><path d="M597 237.500h6M600 235v6" stroke="#fff" stroke-width=".4"/>
<text x="613.700" y="240.500" text-anchor="middle" font-size="10" style="fill:#2b88d8;font-weight:bold">R</text>
<text x="630.700" y="240.500" text-anchor="middle" font-size="10.500" style="fill:#2b88d8;font-weight:bold">Py</text>
<path d="M642 231v10" class="ic"/><path d="M643 233h6M643 236.500h8M643 240h4" stroke="#666" stroke-width=".9"/><circle cx="651" cy="233" r="1.300" fill="#2b88d8"/><circle cx="649" cy="240" r="1.300" fill="#e8893c"/>
</g>
<!-- row 6 -->
<g>
<rect x="558" y="250.500" width="3.500" height="3.500" class="b"/><rect x="563.500" y="247" width="5" height="3" class="b"/><rect x="563.500" y="251" width="5" height="3" class="b"/><rect x="563.500" y="255" width="5" height="3" class="b"/><path d="M561 252h3" stroke="#3a96dd"/>
<path d="M574.500 247h11v8.500h-6l-2.500 2.500v-2.500h-2.500z" fill="#fff" stroke="#4a7fa8" stroke-width=".9"/>
<path d="M592 247h7l3 3v8h-10z" fill="#fff" stroke="#666" stroke-width=".8"/><path d="M594 252h6M594 255h6" stroke="#3a96dd" stroke-width=".8"/>
<path d="M610 246.500h7.500v4a3.700 3.700 0 0 1-7.500 0zM613.700 254.500v2.500M611 258h5.500" fill="#fff" stroke="#555" stroke-width=".9"/><path d="M610 248h-1.500v1.500l1.500 1M617.500 248H619v1.500l-1.500 1" fill="none" stroke="#555" stroke-width=".7"/>
<path d="M625.500 247h7l3 3v8h-10z" fill="#fff" stroke="#555" stroke-width=".8"/><path d="M628 256v-2M630.500 256v-4M633 256v-3" stroke="#444" stroke-width="1"/>
<rect x="642" y="247" width="11" height="11" fill="#fff" stroke="#3a96dd" stroke-width=".9"/><rect x="641" y="246.500" width="4" height="5" fill="#e8893c"/><path d="M645 254l5-4" stroke="#3a96dd"/><circle cx="651" cy="256" r="1.500" fill="#d9532c"/>
</g>
<!-- row 7 -->
<path d="M563.300 263l5.700 6-5.700 6-5.700-6z" fill="#f8eefb" stroke="#b146c2" stroke-width=".9"/><path d="M560.500 266l5.500 6M566 266l-5.500 6" stroke="#b146c2" stroke-width=".6"/>
<path d="M575 264h5l5 5-5 5h-5l4-5z" fill="none" stroke="#2b88d8" stroke-width="1"/><path d="M578 264l4.500 5-4.500 5" fill="none" stroke="#2b88d8" stroke-width=".7"/>
<text x="597" y="270" text-anchor="middle" font-size="7" style="fill:#666">···</text>
<path d="M552 280h106" stroke="#e4e4e4" stroke-width=".7"/>
<!-- wells -->
<text x="559" y="293" font-size="6.800">Y-axis</text>
<rect x="555" y="299" width="100" height="20" fill="#fff" stroke="#ddd" stroke-width=".5" stroke-dasharray="1 1"/>
<rect x="556" y="300" width="98" height="14" fill="#e9e8e7"/>
<text x="558.500" y="309.500" font-size="6.900">category</text>
<path d="M636 305.500l3.200 3 3.200-3M646.500 305l4.500 4.500M651 305l-4.500 4.500" fill="none" stroke="#555" stroke-width=".7"/>
<text x="559" y="333" font-size="6.800">X-axis</text>
<rect x="555" y="339" width="100" height="20" fill="#fff" stroke="#ddd" stroke-width=".5" stroke-dasharray="1 1"/>
<rect x="556" y="340" width="98" height="14" fill="#e9e8e7"/>
<text x="558.500" y="349.500" font-size="6.900">Sum of revenue</text>
<path d="M636 345.500l3.200 3 3.200-3M646.500 345l4.500 4.500M651 345l-4.500 4.500" fill="none" stroke="#555" stroke-width=".7"/>
<text x="559" y="373" font-size="6.800">Legend</text>
<rect x="555" y="379" width="100" height="8" fill="#fff"/>
<rect x="656" y="282" width="3.500" height="39" fill="#c8c8c8" rx="1"/>

<!-- data panel -->
<text x="665" y="110" font-size="9" style="font-weight:bold;fill:#333">Data</text>
<path d="M756 103l3.500 3.500-3.500 3.500M760 103l3.500 3.500-3.500 3.500" fill="none" stroke="#555" stroke-width=".8"/>
<rect x="663" y="123" width="102.500" height="14" fill="#fff" stroke="#bbb" stroke-width=".6" rx=".8"/>
<circle cx="673" cy="129" r="2.800" fill="none" stroke="#555" stroke-width=".7"/><path d="M671 131l-2.500 2.500" stroke="#555" stroke-width=".7"/>
<text x="679.500" y="133" font-size="7.300" style="fill:#666">Search</text>
<g fill="none" stroke="#666" stroke-width=".7"><path d="M667 148l3 3-3 3M667 162.300l3 3-3 3M667 176.700l3 3-3 3M667 191l3 3-3 3M667 205.300l3 3-3 3M667 220l3 3-3 3"/></g>
<g fill="#666"><rect x="673" y="147.300" width="7.500" height="7.500"/><rect x="673" y="161.600" width="7.500" height="7.500"/><rect x="673" y="176" width="7.500" height="7.500"/><rect x="673" y="190.300" width="7.500" height="7.500"/><rect x="673" y="204.600" width="7.500" height="7.500"/><rect x="673" y="219.300" width="7.500" height="7.500"/></g>
<g stroke="#f3f2f1" stroke-width=".5"><path d="M673 149.800h7.500M673 152.300h7.500M675.500 147.300v7.500M678 147.300v7.500M673 164.100h7.500M673 166.600h7.500M675.500 161.600v7.500M678 161.600v7.500M673 178.500h7.500M673 181h7.500M675.500 176v7.500M678 176v7.500M673 192.800h7.500M673 195.300h7.500M675.500 190.300v7.500M678 190.300v7.500M673 207.100h7.500M673 209.600h7.500M675.500 204.600v7.500M678 204.600v7.500M673 221.800h7.500M673 224.300h7.500M675.500 219.300v7.500M678 219.300v7.500"/></g>
<circle cx="681" cy="154" r="3" fill="#117865"/><circle cx="681" cy="183" r="3" fill="#117865"/>
<path d="M679.700 154l1 1 1.600-1.800M679.700 183l1 1 1.600-1.800" fill="none" stroke="#fff" stroke-width=".5"/>
<text class="dt" x="684.500" y="153.500">producthierarchy</text><text class="dt" x="684.500" y="167.800">Sales 2017 2018 2019</text><text class="dt" x="684.500" y="182.200">sales2017</text><text class="dt" x="684.500" y="196.500">sales2018</text><text class="dt" x="684.500" y="210.800">sales2019</text><text class="dt" x="684.500" y="225.500">store_cities</text>

<!-- page tabs -->
<path d="M31 375l-2.500 2.500 2.500 2.500M41 375l2.500 2.500-2.500 2.500" fill="none" stroke="#bbb" stroke-width=".8"/>
<rect x="48.500" y="367" width="44.500" height="19" fill="#fff"/><rect x="48" y="386" width="45" height="2" fill="#117865"/>
<text x="71" y="380.500" text-anchor="middle" font-size="7.200" style="font-weight:bold;fill:#444">Page 1</text>
<rect x="94" y="368" width="23.500" height="19.500" fill="#117865"/><path d="M105.500 373.500v8M101.500 377.500h8" stroke="#fff" stroke-width="1.800"/>
<!-- status -->
<path d="M0 388h768" stroke="#e8e8e8" stroke-width=".6"/>
<text x="3" y="397.500" font-size="6.800" style="fill:#777">Page 1 of 1</text>
<path d="M636 395h2.500M641 395h60" stroke="#999" stroke-width=".6"/><rect x="657.500" y="392" width="1.800" height="6.500" fill="#555"/><path d="M671 394v2" stroke="#999"/><path d="M704.500 395h4.500M706.700 392.800v4.500" stroke="#555" stroke-width=".8"/>
<text x="719" y="397.500" font-size="6.800" style="fill:#888">62%</text>
<rect x="745" y="391.500" width="10" height="7" fill="#fff" stroke="#777" stroke-width="1"/>

<!-- taskbar -->
<rect y="403" width="768" height="28" fill="#1c1c1c"/>
<g>
<path d="M6 422a3.500 3.500 0 0 1 1-6.500 5 5 0 0 1 9-2.500 4 4 0 0 1 5 5 2.500 2.500 0 0 1-1 4z" fill="#8ec4ee"/><path d="M6 419h15v3H6z" fill="#e9f2fa"/><circle cx="18" cy="411" r="4.500" fill="#c42b1c"/><text x="18" y="413" text-anchor="middle" font-size="6" style="fill:#fff;font-weight:bold">1</text>
<g fill="#4cb8f0"><rect x="131" y="410" width="6.700" height="6.700"/><rect x="138.500" y="410" width="6.700" height="6.700"/><rect x="131" y="417.500" width="6.700" height="6.700"/><rect x="138.500" y="417.500" width="6.700" height="6.700"/></g>
<circle cx="164" cy="416" r="4.800" fill="none" stroke="#e0e0e0" stroke-width="1.500"/><path d="M167.500 420l3 3" stroke="#e0e0e0" stroke-width="1.600"/>
<rect x="185" y="414" width="9" height="9" fill="#666"/><rect x="190" y="410" width="9" height="9" fill="#ddd"/>
<circle cx="218" cy="416.500" r="6.800" fill="#5b5fc7"/><rect x="214" y="414" width="5.500" height="5" fill="#fff" rx=".5"/><path d="M220 415.500l2.500-1.500v5l-2.500-1.500z" fill="#fff"/>
<rect x="237" y="410" width="14.500" height="14" fill="#2b7cc4"/><path d="M239 417h3l1.500-3 2 5 1.500-2h3" fill="none" stroke="#cfe6f7" stroke-width=".8"/>
<circle cx="270.500" cy="417" r="7" fill="#1b6fc4"/><path d="M264 415a7 7 0 0 1 13.500 1c0 2-3 2.500-4.500 1.500 1-3-3.500-5-6-3z" fill="#3dc29a"/><circle cx="271" cy="419" r="2.500" fill="#1c1c1c"/>
<path d="M290 411h5l1.500 1.500H304v12h-14z" fill="#f2c447"/><rect x="290" y="414" width="14" height="1.200" fill="#fbe59a"/><rect x="294" y="419" width="6" height="3" fill="#2c8fd6"/>
<rect x="320" y="411" width="7" height="5" fill="#e24e2e"/><rect x="320" y="416" width="3.500" height="4" fill="#a259ff"/><rect x="323.500" y="416" width="3.500" height="4" fill="#1abcfe"/><rect x="320" y="420" width="3.500" height="3" fill="#0acf83"/>
<circle cx="349.500" cy="417" r="6.800" fill="#fff"/><circle cx="349.500" cy="417" r="5" fill="#25d366"/><path d="M347 414.500c0 3 2 5 5 5l1-1.500-1.500-1-1 .5-1.500-1.500.5-1-1-1.500z" fill="#fff"/><circle cx="356" cy="411" r="3.800" fill="#4cb8f0"/><text x="356" y="413" text-anchor="middle" font-size="5.500" style="fill:#111;font-weight:bold">1</text>
<circle cx="376" cy="417" r="7" fill="#e33b2e"/><path d="M376 417l6.500-2a7 7 0 0 1-5 9z" fill="#f7c52b"/><path d="M376 417l1.500 7a7 7 0 0 1-7.500-4z" fill="#2fa84f"/><circle cx="376" cy="417" r="3" fill="#4a90e2" stroke="#fff"/>
<circle cx="403" cy="417" r="7" fill="#5865f2"/><path d="M399 414.500c2.500-1 5.500-1 8 0l1 4.500-2 1-1-1.200h-4l-1 1.200-2-1z" fill="#fff"/><circle cx="401.500" cy="417" r=".9" fill="#5865f2"/><circle cx="404.500" cy="417" r=".9" fill="#5865f2"/>
<rect x="426" y="410" width="10" height="14" fill="#21a366"/><rect x="421.500" y="413" width="8" height="8" fill="#107c41"/><text x="425.500" y="419.500" text-anchor="middle" font-size="6" style="fill:#fff;font-weight:bold">x</text>
<path d="M460 410l-9 7-3-2.300-1 .8 3 2.500-3 2.500 1 .8 3-2.300 9 7 1-1V411z" fill="#2b8fdc"/><path d="M459 413.500v7.500l-4-3.700z" fill="#1c1c1c"/>
<circle cx="483" cy="417" r="7" fill="#d35230"/><path d="M483 410a7 7 0 0 1 7 7h-7z" fill="#ed6c47"/><rect x="475.500" y="413" width="8" height="8" fill="#c43e1c"/><text x="479.500" y="419.500" text-anchor="middle" font-size="6" style="fill:#fff;font-weight:bold">P</text>
<rect x="497" y="404.500" width="24" height="22.500" fill="#333" rx="2"/><rect x="501.500" y="409" width="11" height="11" fill="#eee"/><path d="M503 411h3M507 411h3M503 413.500h6" stroke="#d9532c" stroke-width="1"/><path d="M509 421l5-4" stroke="#3a96dd" stroke-width="1.500"/><circle cx="514.500" cy="416" r="1.600" fill="#3a96dd"/><rect x="503" y="425" width="10" height="1.500" fill="#4cc2ff"/>
<rect x="531" y="410" width="11" height="14" fill="#7719aa"/><rect x="528" y="413" width="8" height="8" fill="#9332bf"/><text x="532" y="419.500" text-anchor="middle" font-size="6" style="fill:#fff;font-weight:bold">N</text>
<rect x="564" y="409" width="4.500" height="15" fill="#f2c811"/><rect x="559.500" y="413" width="4.500" height="11" fill="#e8b60a"/><rect x="555" y="417" width="4.500" height="7" fill="#c99c00"/>
</g>
<g fill="#999"><rect x="294.500" y="427" width="3" height="1.200"/><rect x="348" y="427" width="3" height="1.200"/><rect x="374.500" y="427" width="3" height="1.200"/><rect x="401.500" y="427" width="3" height="1.200"/><rect x="427.500" y="427" width="3" height="1.200"/><rect x="454" y="427" width="3" height="1.200"/><rect x="480.500" y="427" width="3" height="1.200"/><rect x="533.500" y="427" width="3" height="1.200"/><rect x="559.500" y="427" width="3" height="1.200"/></g>
<path d="M588 418l3.500-3.500 3.500 3.500" fill="none" stroke="#ddd" stroke-width="1"/>
<path d="M607 420a2.500 2.500 0 0 1 .5-4.500 3.500 3.500 0 0 1 6.500-.5 3 3 0 0 1 2 5z" fill="#ddd"/>
<rect x="625" y="412" width="10" height="8" fill="none" stroke="#aaa" stroke-width=".8"/><path d="M626.500 414.500h7M626.500 417h7" stroke="#aaa" stroke-dasharray="1 .6" stroke-width=".8"/>
<text x="653" y="414.500" text-anchor="middle" font-size="6.800" style="fill:#ddd">ENG</text><text x="653" y="424" text-anchor="middle" font-size="6.800" style="fill:#ddd">IN</text>
<path d="M671 415a6 6 0 0 1 9 0M672.500 417a4 4 0 0 1 6 0M674 419a2 2 0 0 1 3 0" fill="none" stroke="#ddd" stroke-width=".8"/><circle cx="675.500" cy="421" r=".8" fill="#ddd"/>
<path d="M686 415h2l2.500-2.500v9L688 419h-2zM692 414.500a4 4 0 0 1 0 5.500M693.500 413a6 6 0 0 1 0 8.500" fill="none" stroke="#ddd" stroke-width=".8"/>
<rect x="700" y="413" width="8" height="7.500" fill="none" stroke="#ddd" stroke-width=".9" rx="1"/><rect x="701.500" y="414.500" width="4.500" height="4.500" fill="#ddd"/><rect x="708.500" y="415.500" width="1" height="2.500" fill="#ddd"/>
<text x="748" y="414.500" text-anchor="middle" font-size="6.900" style="fill:#e8e8e8">15:10</text>
<text x="747.500" y="424" text-anchor="middle" font-size="6.900" style="fill:#e8e8e8">26-05-2023</text>
</svg>
</body></html>
